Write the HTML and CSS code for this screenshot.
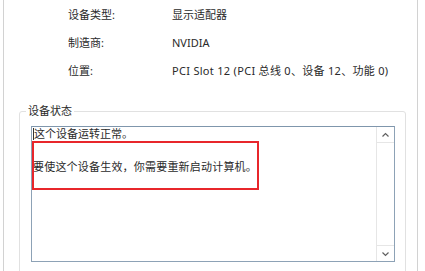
FILE: index.html
```html
<!DOCTYPE html>
<html lang="zh-CN">
<head>
<meta charset="utf-8">
<link rel="stylesheet" href="styles.css">
</head>
<body>
<div class="frame">
  <div class="props">
    <div class="row"><span class="label">设备类型:</span><span class="value">显示适配器</span></div>
    <div class="row"><span class="label">制造商:</span><span class="value">NVIDIA</span></div>
    <div class="row"><span class="label">位置:</span><span class="value wide">PCI Slot 12 (PCI 总线 0、设备 12、功能 0)</span></div>
  </div>
  <div class="group">
    <div class="group-title">设备状态</div>
    <div class="textbox">
      <div class="text">
        <p class="line first"><span class="caret"></span>这个设备运转正常。</p>
        <p class="line second">要使这个设备生效，你需要重新启动计算机。</p>
      </div>
      <div class="scrollbar">
        <div class="sb-btn up"><svg width="9" height="6" viewBox="0 0 9 6"><path d="M1.5 4.5 L4.5 1.5 L7.5 4.5" fill="none" stroke="#606060" stroke-width="1.2"/></svg></div>
        <div class="sb-track"></div>
        <div class="sb-btn down"><svg width="9" height="6" viewBox="0 0 9 6"><path d="M1.5 1.5 L4.5 4.5 L7.5 1.5" fill="none" stroke="#606060" stroke-width="1.2"/></svg></div>
      </div>
      <div class="highlight"></div>
    </div>
  </div>
</div>
</body>
</html>
```

FILE: styles.css
```css
html, body {
  margin: 0;
  padding: 0;
  background: #ffffff;
}
body {
  font-family: "Noto Sans", "Noto Sans CJK SC", sans-serif;
  font-size: 11px;
  color: #2a2a2a;
  width: 425px;
  height: 271px;
  overflow: hidden;
}
.frame {
  margin-left: 3px;
  width: 413px;
  height: 270px;
  overflow: hidden;
  border-left: 1px solid #d2d2d2;
  border-right: 1px solid #d2d2d2;
  padding-top: 1px;
}
.props {
  padding-left: 64px;
}
.row {
  display: flex;
  height: 28px;
  line-height: 28px;
}
.label {
  width: 104px;
}
.wide {
  letter-spacing: 0.3px;
}
.group {
  margin-top: 26px;
  margin-left: 15px;
  width: 365px;
  border: 1px solid #e1e1e1;
  border-radius: 3px;
  padding: 0 9px 12px 11px;
}
.group-title {
  display: block;
  width: fit-content;
  margin-top: -8px;
  margin-left: -5px;
  padding: 0 2px;
  line-height: 14px;
  background: #ffffff;
}
.textbox {
  position: relative;
  margin-top: 8px;
  width: 362px;
  height: 134px;
  border: 1px solid #8da2b6;
  border-top-color: #7f96ac;
  display: flex;
}
.text {
  flex: 1;
  padding-left: 1px;
}
.line {
  margin: 0;
  line-height: 14px;
  white-space: nowrap;
}
.second {
  margin-top: 19px;
  letter-spacing: 0.2px;
}
.caret {
  display: inline-block;
  width: 1px;
  height: 12px;
  background: #333;
  vertical-align: -2px;
}
.scrollbar {
  width: 17px;
  display: flex;
  flex-direction: column;
  border-left: 1px solid #e6e6e6;
  background: #ffffff;
}
.sb-btn {
  height: 15px;
  display: flex;
  align-items: center;
  justify-content: center;
}
.sb-btn.up {
  border-bottom: 1px solid #e6e6e6;
}
.sb-btn.down {
  border-top: 1px solid #e6e6e6;
}
.sb-track {
  flex: 1;
}
.highlight {
  position: absolute;
  left: 0;
  top: 14px;
  width: 223px;
  height: 45px;
  border: 2px solid #e8262b;
}
```
